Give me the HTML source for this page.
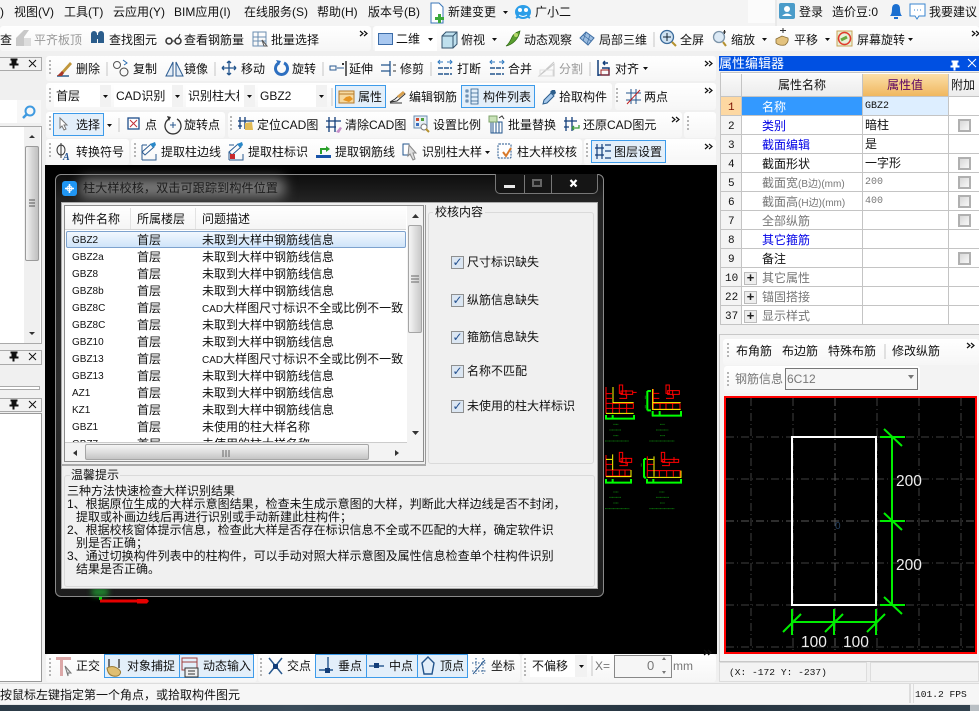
<!DOCTYPE html>
<html lang="zh"><head><meta charset="utf-8"><title>柱大样校核</title>
<style>
html,body{margin:0;padding:0}
body{position:relative;width:979px;height:711px;overflow:hidden;background:#f0f0f0;font:12px/14px "Liberation Sans","Noto Sans CJK SC",sans-serif;color:#111}
div{position:absolute;box-sizing:border-box}
span{position:absolute;white-space:nowrap;line-height:14px;font-size:12px}
span[style*="font-size:10px"]{margin-top:1px}
svg{position:absolute;left:0;top:0}
small{font-size:10px}
.tb{background:linear-gradient(#fff,#f6f6f6);border-radius:3px}
.btn{background:#e3effa;border:1px solid #3d9bea}
.cb{background:#fff;}
.g{color:#999}
.blue{color:#0000e6}
.d{color:#777}
.m{font-family:"Liberation Mono","Noto Sans CJK SC",monospace;font-size:10px;margin-top:1px}
span.m[style*="left:72"]{margin-top:2px;font-size:11px}
.w{color:#fff}
.l{background:#c4c4c4}
.chk{width:13px;height:13px;background:linear-gradient(135deg,#d8d8d8,#f8f8f8);border:2px solid #b0b0b0}
.plus{width:13px;height:13px;background:#eee;border:1px solid #bbb;font:bold 13px/11px "Liberation Mono",monospace;text-align:center;color:#222}
.dc{width:13px;height:13px;background:#dbe6f2;border:1px solid #8e8f8f;color:#23508f;font:bold 12px/11px "Liberation Sans","DejaVu Sans",sans-serif;text-align:center}
</style></head><body>

<!-- top bars -->
<div style="left:0;top:0;width:979px;height:26px;background:#f4f4f4"></div>
<div style="left:748px;top:0;width:27px;height:23px;background:#fbfbfb"></div>
<div style="left:775px;top:0;width:2px;height:26px;background:#e9e9e9"></div>
<div class="tb" style="left:0;top:26px;width:371px;height:25px"></div>
<div class="tb" style="left:373px;top:26px;width:606px;height:25px"></div>
<div class="cb" style="left:375px;top:27px;width:62px;height:24px"></div>

<div class="tb" style="left:46px;top:56px;width:670px;height:25px"></div>
<div class="tb" style="left:46px;top:83px;width:566px;height:27px"></div>
<div class="tb" style="left:615px;top:83px;width:101px;height:27px"></div>
<div class="tb" style="left:46px;top:112px;width:179px;height:26px"></div>
<div class="tb" style="left:228px;top:112px;width:454px;height:26px"></div>
<div class="tb" style="left:684px;top:112px;width:32px;height:26px"></div>
<div class="tb" style="left:46px;top:139px;width:83px;height:26px"></div>
<div class="tb" style="left:131px;top:139px;width:451px;height:26px"></div>
<div class="tb" style="left:584px;top:139px;width:132px;height:26px"></div>

<!-- combos -->
<div class="cb" style="left:54px;top:85px;width:46px;height:22px"></div>
<div class="cb" style="left:114px;top:85px;width:58px;height:22px"></div>
<div class="cb" style="left:186px;top:85px;width:58px;height:22px"></div>
<div class="cb" style="left:258px;top:85px;width:58px;height:22px"></div>
<div style="left:100px;top:85px;width:11px;height:22px;background:#f2f2f2"></div>
<div style="left:172px;top:85px;width:11px;height:22px;background:#f2f2f2"></div>
<div style="left:244px;top:85px;width:11px;height:22px;background:#f2f2f2"></div>
<div style="left:316px;top:85px;width:11px;height:22px;background:#f2f2f2"></div>

<!-- hot buttons -->
<div class="btn" style="left:335px;top:85px;width:51px;height:23px"></div>
<div class="btn" style="left:461px;top:85px;width:74px;height:23px"></div>
<div class="btn" style="left:53px;top:113px;width:51px;height:23px"></div>
<div class="btn" style="left:591px;top:140px;width:75px;height:23px"></div>

<!-- menu text -->
<span style="left:0;top:5px">)</span>
<span style="left:14px;top:5px">视图(V)</span>
<span style="left:64px;top:5px">工具(T)</span>
<span style="left:113px;top:5px">云应用(Y)</span>
<span style="left:174px;top:5px">BIM应用(I)</span>
<span style="left:244px;top:5px">在线服务(S)</span>
<span style="left:317px;top:5px">帮助(H)</span>
<span style="left:368px;top:5px">版本号(B)</span>
<span style="left:448px;top:5px">新建变更</span>
<span style="left:535px;top:5px">广小二</span>
<span style="left:799px;top:5px">登录</span>
<span style="left:832px;top:5px">造价豆:0</span>
<span style="left:929px;top:5px">我要建议</span>

<!-- row 1 -->
<span style="left:0;top:33px">查</span>
<span class="g" style="left:34px;top:33px">平齐板顶</span>
<span style="left:109px;top:33px">查找图元</span>
<span style="left:184px;top:33px">查看钢筋量</span>
<span style="left:271px;top:33px">批量选择</span>
<span style="left:396px;top:32px">二维</span>
<span style="left:461px;top:33px">俯视</span>
<span style="left:524px;top:33px">动态观察</span>
<span style="left:599px;top:33px">局部三维</span>
<span style="left:680px;top:33px">全屏</span>
<span style="left:731px;top:33px">缩放</span>
<span style="left:794px;top:33px">平移</span>
<span style="left:857px;top:33px">屏幕旋转</span>

<!-- row 2 -->
<span style="left:76px;top:62px">删除</span>
<span style="left:133px;top:62px">复制</span>
<span style="left:184px;top:62px">镜像</span>
<span style="left:241px;top:62px">移动</span>
<span style="left:292px;top:62px">旋转</span>
<span style="left:349px;top:62px">延伸</span>
<span style="left:400px;top:62px">修剪</span>
<span style="left:457px;top:62px">打断</span>
<span style="left:508px;top:62px">合并</span>
<span class="g" style="left:559px;top:62px">分割</span>
<span style="left:615px;top:62px">对齐</span>

<!-- row 3 -->
<span style="left:56px;top:89px">首层</span>
<span style="left:116px;top:89px">CAD识别</span>
<span style="left:188px;top:89px;width:51px;overflow:hidden">识别柱大样</span>
<span style="left:260px;top:89px">GBZ2</span>
<span style="left:358px;top:90px">属性</span>
<span style="left:409px;top:90px">编辑钢筋</span>
<span style="left:483px;top:90px">构件列表</span>
<span style="left:559px;top:90px">拾取构件</span>
<span style="left:644px;top:90px">两点</span>

<!-- row 4 -->
<span style="left:76px;top:118px">选择</span>
<span style="left:145px;top:118px">点</span>
<span style="left:184px;top:118px">旋转点</span>
<span style="left:257px;top:118px">定位CAD图</span>
<span style="left:345px;top:118px">清除CAD图</span>
<span style="left:433px;top:118px">设置比例</span>
<span style="left:508px;top:118px">批量替换</span>
<span style="left:583px;top:118px">还原CAD图元</span>

<!-- row 5 -->
<span style="left:76px;top:145px">转换符号</span>
<span style="left:161px;top:145px">提取柱边线</span>
<span style="left:248px;top:145px">提取柱标识</span>
<span style="left:335px;top:145px">提取钢筋线</span>
<span style="left:422px;top:145px">识别柱大样</span>
<span style="left:517px;top:145px">柱大样校核</span>
<span style="left:614px;top:145px">图层设置</span>

<!-- left panel -->
<div style="left:0;top:57px;width:42px;height:14px;background:#f2f2f2;border:1px solid #aaa;border-left:0"></div>
<div class="cb" style="left:0;top:100px;width:17px;height:23px"></div>
<div style="left:17px;top:100px;width:24px;height:23px;background:#f7f7f7"></div>
<div class="cb" style="left:0;top:126px;width:42px;height:218px;border:1px solid #aaa;border-left:0"></div>
<div style="left:24px;top:127px;width:16px;height:216px;background:#f0f0f0"></div>
<div style="left:25px;top:146px;width:14px;height:115px;background:linear-gradient(90deg,#f3f3f3,#d4d4d4 55%,#c0c0c0);border:1px solid #9a9a9a;border-radius:2px"></div>
<div style="left:0;top:350px;width:42px;height:15px;background:#f2f2f2;border:1px solid #aaa;border-left:0"></div>
<div style="left:0;top:386px;width:40px;height:4px;background:#fff;border:1px solid #aaa;border-left:0"></div>
<div style="left:0;top:398px;width:42px;height:14px;background:#f2f2f2;border:1px solid #aaa;border-left:0"></div>
<div class="cb" style="left:0;top:413px;width:42px;height:269px;border:1px solid #999;border-left:0"></div>

<!-- canvas -->
<div style="left:45px;top:165px;width:672px;height:489px;background:#000"></div>

<!-- right panel -->
<div style="left:719px;top:56px;width:260px;height:15px;background:#0050e2"></div>
<span class="w" style="left:719px;top:57px;font-size:13px">属性编辑器</span>
<div style="left:720px;top:72px;width:259px;height:253px;background:#fff;border:1px solid #c4c4c4;border-right:0"></div>
<div style="left:721px;top:74px;width:21px;height:22px;background:linear-gradient(#fafafa,#ececec)"></div>
<div style="left:742px;top:74px;width:120px;height:22px;background:linear-gradient(#fafafa,#ececec)"></div>
<div style="left:862px;top:74px;width:86px;height:22px;background:linear-gradient(#fbdfa8,#f0b75f)"></div>
<div style="left:948px;top:74px;width:31px;height:22px;background:linear-gradient(#fafafa,#ececec)"></div>
<div style="left:721px;top:96px;width:21px;height:19px;background:#fdd8a2"></div>
<div style="left:742px;top:96px;width:120px;height:19px;background:#3399ff"></div>
<div style="left:862px;top:96px;width:86px;height:19px;background:#ddeeff"></div>
<div style="left:721px;top:115px;width:21px;height:209px;background:#f4f4f4"></div>
<div class="l" style="left:721px;top:96px;width:258px;height:1px"></div>
<div class="l" style="left:721px;top:115px;width:258px;height:1px"></div>
<div class="l" style="left:721px;top:134px;width:258px;height:1px"></div>
<div class="l" style="left:721px;top:153px;width:258px;height:1px"></div>
<div class="l" style="left:721px;top:172px;width:258px;height:1px"></div>
<div class="l" style="left:721px;top:191px;width:258px;height:1px"></div>
<div class="l" style="left:721px;top:210px;width:258px;height:1px"></div>
<div class="l" style="left:721px;top:229px;width:258px;height:1px"></div>
<div class="l" style="left:721px;top:248px;width:258px;height:1px"></div>
<div class="l" style="left:721px;top:267px;width:258px;height:1px"></div>
<div class="l" style="left:721px;top:286px;width:258px;height:1px"></div>
<div class="l" style="left:721px;top:305px;width:258px;height:1px"></div>
<div class="l" style="left:721px;top:324px;width:258px;height:1px"></div>
<div class="l" style="left:741px;top:74px;width:1px;height:250px"></div>
<div class="l" style="left:862px;top:74px;width:1px;height:250px"></div>
<div class="l" style="left:948px;top:74px;width:1px;height:250px"></div>

<span style="left:778px;top:78px">属性名称</span>
<span style="left:887px;top:78px;color:#5a0060">属性值</span>
<span style="left:951px;top:78px">附加</span>

<span class="m" style="left:728px;top:99px;color:#7a1000">1</span>
<span class="m" style="left:728px;top:118px">2</span>
<span class="m" style="left:728px;top:137px">3</span>
<span class="m" style="left:728px;top:156px">4</span>
<span class="m" style="left:728px;top:175px">5</span>
<span class="m" style="left:728px;top:194px">6</span>
<span class="m" style="left:728px;top:213px">7</span>
<span class="m" style="left:728px;top:232px">8</span>
<span class="m" style="left:728px;top:251px">9</span>
<span class="m" style="left:725px;top:270px">10</span>
<span class="m" style="left:725px;top:289px">22</span>
<span class="m" style="left:725px;top:308px">37</span>

<span class="w" style="left:762px;top:100px">名称</span>
<span class="blue" style="left:762px;top:119px">类别</span>
<span class="blue" style="left:762px;top:138px">截面编辑</span>
<span style="left:762px;top:157px">截面形状</span>
<span class="d" style="left:762px;top:176px">截面宽<small>(B边)(mm)</small></span>
<span class="d" style="left:762px;top:195px">截面高<small>(H边)(mm)</small></span>
<span class="d" style="left:762px;top:214px">全部纵筋</span>
<span class="blue" style="left:762px;top:233px">其它箍筋</span>
<span style="left:762px;top:252px">备注</span>
<span class="d" style="left:762px;top:271px">其它属性</span>
<span class="d" style="left:762px;top:290px">锚固搭接</span>
<span class="d" style="left:762px;top:309px">显示样式</span>

<span class="m" style="left:865px;top:99px">GBZ2</span>
<span style="left:865px;top:118px">暗柱</span>
<span style="left:865px;top:137px">是</span>
<span style="left:865px;top:156px">一字形</span>
<span class="m d" style="left:865px;top:175px">200</span>
<span class="m d" style="left:865px;top:194px">400</span>

<div class="chk" style="left:958px;top:119px"></div>
<div class="chk" style="left:958px;top:157px"></div>
<div class="chk" style="left:958px;top:176px"></div>
<div class="chk" style="left:958px;top:195px"></div>
<div class="chk" style="left:958px;top:214px"></div>
<div class="chk" style="left:958px;top:252px"></div>
<div class="plus" style="left:744px;top:272px">+</div>
<div class="plus" style="left:744px;top:291px">+</div>
<div class="plus" style="left:744px;top:310px">+</div>

<div style="left:719px;top:334px;width:260px;height:328px;background:#f3f3f3;border:1px solid #c8c8c8;border-right:0"></div>
<div class="tb" style="left:723px;top:339px;width:256px;height:26px"></div>
<div class="tb" style="left:724px;top:366px;width:196px;height:27px"></div>
<span style="left:736px;top:344px">布角筋</span>
<span style="left:782px;top:344px">布边筋</span>
<span style="left:828px;top:344px">特殊布筋</span>
<span style="left:892px;top:344px">修改纵筋</span>
<span class="d" style="left:735px;top:372px">钢筋信息</span>
<div style="left:785px;top:368px;width:133px;height:22px;border:1px solid #777;background:#f6f6f6"></div>
<span class="d" style="left:787px;top:372px">6C12</span>

<!-- bottom status boxes -->
<div style="left:719px;top:662px;width:148px;height:20px;background:#f3f3f3;border:1px solid #ddd"></div>
<div style="left:870px;top:662px;width:109px;height:20px;background:#f3f3f3;border:1px solid #ddd"></div>
<span class="m" style="left:729px;top:664px;font-size:9.6px">(X: -172 Y: -237)</span>

<!-- bottom toolbars -->
<div class="tb" style="left:46px;top:654px;width:211px;height:28px"></div>
<div class="tb" style="left:258px;top:654px;width:262px;height:28px"></div>
<div class="tb" style="left:522px;top:654px;width:194px;height:28px"></div>
<div class="btn" style="left:104px;top:654px;width:76px;height:24px"></div>
<div class="btn" style="left:179px;top:654px;width:75px;height:24px"></div>
<div class="btn" style="left:315px;top:654px;width:52px;height:24px"></div>
<div class="btn" style="left:366px;top:654px;width:52px;height:24px"></div>
<div class="btn" style="left:417px;top:654px;width:51px;height:24px"></div>
<div class="cb" style="left:530px;top:655px;width:45px;height:22px"></div>
<div style="left:575px;top:655px;width:12px;height:22px;background:#f2f2f2"></div>
<div style="left:614px;top:655px;width:58px;height:23px;background:#f6f6f6;border:1px solid #888"></div>
<span style="left:76px;top:659px">正交</span>
<span style="left:127px;top:659px">对象捕捉</span>
<span style="left:203px;top:659px">动态输入</span>
<span style="left:287px;top:659px">交点</span>
<span style="left:338px;top:659px">垂点</span>
<span style="left:389px;top:659px">中点</span>
<span style="left:440px;top:659px">顶点</span>
<span style="left:491px;top:659px">坐标</span>
<span style="left:532px;top:659px">不偏移</span>
<span class="d" style="left:595px;top:659px">X=</span>
<span class="d" style="left:647px;top:659px;font-size:13px">0</span>
<span class="d" style="left:673px;top:659px">mm</span>

<!-- status bar -->
<div style="left:0;top:683px;width:979px;height:22px;background:#f6f6f6;border-top:1px solid #dcdcdc;border-bottom:1px solid #e8e8e8"></div>
<div style="left:909px;top:684px;width:2px;height:19px;background:#ddd"></div>
<div style="left:913px;top:684px;width:66px;height:19px;border-left:1px solid #ddd"></div>
<span style="left:0;top:688px">按鼠标左键指定第一个角点，或拾取构件图元</span>
<span class="m" style="left:915px;top:687px;font-size:9.6px">101.2 FPS</span>
<div style="left:0;top:705px;width:979px;height:6px;background:linear-gradient(90deg,#2b3a46,#3a4c5a 30%,#25333f 70%,#33434f)"></div>
<div style="left:970px;top:705px;width:9px;height:6px;background:#b9bfc4"></div>

<!-- overlay icons and drawings -->
<svg width="979" height="711" viewBox="0 0 979 711" fill="none">
<!-- grips -->
<g stroke="#b5b5b5" stroke-width="2" stroke-dasharray="2 2">
<path d="M50 60V76M50 88V104M50 116V132M50 143V159M135 143V159M231 116V132M617 88V104M688 116V132M587 143V159M50 658V676M261 658V676M525 658V676M728 343V359M728 372V388"/>
</g>
<!-- separators -->
<path d="M107 62V76M215 62V76M323 62V76M431 62V76M590 62V76M332 88V106M119 118V132M654 32V47M885 344V359M592 656V676" stroke="#c6c6c6"/>
<!-- chevrons » -->
<g stroke="#111" stroke-width="1.2">
<path d="M360 31l3 2.500-3 2.500M364 31l3 2.500-3 2.500M972 31l3 2.500-3 2.500M976 31l3 2.500-3 2.500M705 61l3 2.500-3 2.500M709 61l3 2.500-3 2.500M705 88l3 2.500-3 2.500M709 88l3 2.500-3 2.500M672 117l3 2.500-3 2.500M676 117l3 2.500-3 2.500M705 144l3 2.500-3 2.500M709 144l3 2.500-3 2.500M704 650l3 2.500-3 2.500M708 650l3 2.500-3 2.500M967 343l3 2.500-3 2.500M971 343l3 2.500-3 2.500"/>
</g>
<!-- dropdown arrows -->
<g fill="#111">
<path d="M503 11h5l-2.500 3zM428 38h5l-2.500 3zM492 38h5l-2.500 3zM762 38h5l-2.500 3zM825 38h5l-2.500 3zM908 38h5l-2.500 3zM643 67h5l-2.500 3zM103 95h5l-2.500 3zM175 95h5l-2.500 3zM247 95h5l-2.500 3zM319 95h5l-2.500 3zM107 124h5l-2.500 3zM485 151h5l-2.500 3zM579 665h5l-2.500 3z"/>
</g>
<path d="M908 375h6l-3 4z" fill="#777"/>

<!-- menu icons -->
<path d="M431 3h8l4 4v16h-12z" fill="#fff" stroke="#3a76b8"/><path d="M436 19h3v-3h3v3h3v3h-3v3h-3v-3h-3z" fill="#3aa83a" transform="translate(-1 -2)"/>
<ellipse cx="523" cy="12" rx="8" ry="7" fill="#2c9ee8"/><circle cx="520" cy="10" r="2" fill="#fff"/><circle cx="526" cy="10" r="2" fill="#fff"/><path d="M519 15q4 3 8 0" stroke="#fff"/><path d="M516 18l3-2M530 18l-3-2" stroke="#2c9ee8" stroke-width="2"/>
<rect x="779" y="3" width="16" height="16" rx="2" fill="#4b9cc9"/><circle cx="787" cy="9" r="3" fill="#fff"/><path d="M782 16q5-5 10 0z" fill="#fff"/>
<path d="M890 16q2-2 2-7 0-5 4-5t4 5q0 5 2 7zM894 17h4v2h-4z" fill="#1b6fd0"/>
<path d="M910 4h15v12h-6l-2 3-2-3h-5z" fill="#fff" stroke="#3a86d0"/><path d="M914 10h1M917 10h1M920 10h1" stroke="#3a86d0"/>

<!-- row 1 icons -->
<path d="M16 46V38l8-8h5l-5 7v9z" fill="#c8c8c8"/><path d="M24 38h7v8h-7z" fill="#ddd"/>
<path d="M91 34a3 3 0 016 0v9h-6zM98 34a3 3 0 016 0v9h-6z" fill="#2b5d8c"/><path d="M96 35h3v4h-3z" fill="#2b5d8c"/>
<circle cx="169" cy="41" r="3" stroke="#333" stroke-width="1.500"/><circle cx="178" cy="41" r="3" stroke="#333" stroke-width="1.500"/><path d="M172 41h3M178 38l2-4" stroke="#333"/>
<path d="M253 32h13v14h-13zM253 37h13M253 41h13M258 32v14" stroke="#6a8db0"/><path d="M262 40l5 6-3 0z" fill="#fff" stroke="#555"/>
<rect x="378.500" y="33.500" width="14" height="11" fill="#a9c8f0" stroke="#3c6ca8"/>
<path d="M442 36l4-4h11v12l-4 4h-11z" fill="#bfe0ee" stroke="#34556f"/><path d="M442 36h11v12M453 36l4-4" stroke="#34556f"/>
<path d="M506 46q3-2 6-9 2-4 8-6-1 6-5 10-4 4-9 5z" fill="#5a9e2f" stroke="#2f6a14" stroke-width=".7"/><circle cx="516" cy="35" r="2" fill="#b7d96c"/>
<path d="M580 38l6-6 8 6-6 7z" fill="#9cbde0" stroke="#3f6ea3"/><path d="M583 35l8 6M586 32l-3 9M590 35l-3 9" stroke="#3f6ea3" stroke-width=".7"/>
<circle cx="667" cy="37" r="6.500" fill="#cfe2f2" stroke="#3a6a9a" stroke-width="1.300"/><path d="M667 33v8M663 37h8" stroke="#123"/><path d="M672 42l4 4" stroke="#b5912f" stroke-width="2"/>
<circle cx="719" cy="37" r="5.500" fill="#dbe9f5" stroke="#7b93a8" stroke-width="1.300"/><path d="M723 42l3 4" stroke="#b5912f" stroke-width="2"/><path d="M723 32h3M724.500 30v4" stroke="#333"/>
<path d="M776 43q3 3 9 2 4-3 3-7l-6-2-6 3z" fill="#e3c27e" stroke="#86692f" stroke-width=".8"/><path d="M783 33v-5M780 30.500h6" stroke="#333"/>
<rect x="837" y="31" width="15" height="15" fill="#e8f1da" stroke="#c8a558"/><circle cx="844.500" cy="38.500" r="6" stroke="#e03a2a" stroke-width="1.500"/><path d="M841 40l6-3" stroke="#6aa83f" stroke-width="3"/>

<!-- row 2 icons -->
<path d="M57 76h12" stroke="#2b5d8c" stroke-width="1.500"/><path d="M61 72l9-10 2 2-9 10z" fill="#c0963a"/><path d="M57 76l5-5 2 2-2 3z" fill="#a8382a"/>
<circle cx="117" cy="65" r="3.500" stroke="#555"/><circle cx="124" cy="72" r="4" stroke="#444"/><path d="M123 60l4 3-3 2" stroke="#2a6cb0"/>
<path d="M173 62l-7 14h7zM176 62l7 14h-7z" stroke="#2a5a90" fill="#e5eef7"/>
<path d="M229 61v14M222 68h14M229 61l-2 2M229 61l2 2M229 75l-2-2M229 75l2-2M222 68l2-2M222 68l2 2M236 68l-2-2M236 68l-2 2" stroke="#23558d" stroke-width="1.300"/>
<path d="M279 63a6 6 0 105 0" stroke="#2d6fc0" stroke-width="3"/><path d="M276 60l5 1-2 4z" fill="#2d6fc0"/>
<path d="M346 61v15" stroke="#333" stroke-width="1.500"/><path d="M330 66h6v4h-6zM337 68h7" stroke="#2a5a90"/><path d="M342 63h2v2h-2z" fill="#333"/>
<path d="M381 65h9M381 71h9M390 61v15" stroke="#23558d" stroke-width="1.300"/><path d="M393 65h3M393 71h3" stroke="#333"/>
<path d="M438 62h5M447 62h5M440 60l-2 2 2 2M450 60l2 2-2 2" stroke="#2d78c0"/><path d="M438 68h14M438 74h14" stroke="#23558d" stroke-dasharray="5 1" stroke-width="1.400"/>
<path d="M490 62h5M499 62h5M492 60l-2 2 2 2M502 60l2 2-2 2" stroke="#2d78c0"/><path d="M490 68h14M490 74h14" stroke="#23558d" stroke-dasharray="5 1" stroke-width="1.400"/>
<path d="M539 76h15V64zM539 76l15-14" stroke="#c8c8c8"/><rect x="540" y="70" width="13" height="6" stroke="#ddd"/>
<path d="M598 60v16M598 75h11v-7h-7M603 63h5M603 63l2-2M603 63l2 2" stroke="#123e7a" stroke-width="1.500"/><path d="M601 70h8v5h-8z" stroke="#a02020"/>

<!-- row 3 icons -->
<rect x="339" y="91" width="15" height="12" fill="#f6d9a0" stroke="#b57a2a"/><path d="M339 94h15" stroke="#b57a2a"/><path d="M343 100l3-3 4-1 3 3-4 3z" fill="#e79522"/>
<path d="M390 102l5-3 8-7 2 2-8 7zM390 103h12" stroke="#333"/><path d="M397 96l6-5 2 2-6 5z" fill="#d9a04d"/>
<path d="M466 90h2v2h-2zM466 95h2v2h-2zM466 100h2v2h-2z" stroke="#2b5d8c" stroke-width=".8"/><path d="M471 89h7v15h-7zM471 93h7M471 97h7M471 101h7" stroke="#2b5d8c" stroke-width=".8"/>
<path d="M543 104l1-4 7-7 3 3-7 7z" fill="#a6c9ec" stroke="#2b5d8c"/><path d="M550 92l2-2 3 0 1 3-2 2z" fill="#2b5d8c"/>
<path d="M631 89v15M636 89v15M626 93h15M626 100h15" stroke="#23558d"/><path d="M627 104l13-14" stroke="#c02020"/>

<!-- row 4 icons -->
<path d="M60 118l7 7-3 0 2 4-2 1-2-4-2 2z" fill="#fff" stroke="#777"/>
<rect x="128" y="118" width="11" height="11" fill="#fff" stroke="#1e4e8c" stroke-width="1.300"/><path d="M130 120l7 7M137 120l-7 7" stroke="#c0303a"/>
<path d="M169 119a8 8 0 108 0" stroke="#333" stroke-width="1.300"/><path d="M167 116l4 1-2 4z" fill="#333"/><path d="M173 122v6M170 125h6" stroke="#2a5a90"/>
<path d="M240 117v12M245 117v12M238 121h16M238 126h4" stroke="#123e7a" stroke-width="1.300"/><path d="M245 130v-7l7-1 1 8z" fill="#e2bb56"/>
<path d="M329 117v15M335 117v15M326 121h15M326 127h10" stroke="#123e7a" stroke-width="1.300"/><path d="M336 132l4-5 2 1-3 5z" fill="#c58dc8"/>
<rect x="414" y="116" width="13" height="12" fill="#e6eef5" stroke="#6a8db0"/><rect x="416" y="118" width="3" height="3" fill="#d04a30"/><rect x="421" y="118" width="3" height="3" fill="#4f9e3a"/><rect x="416" y="123" width="3" height="3" fill="#3a6fc0"/><circle cx="424" cy="127" r="3" fill="#fff" stroke="#777"/><path d="M426 129l3 3" stroke="#b5912f" stroke-width="2"/>
<rect x="491" y="122" width="11" height="11" fill="#fff" stroke="#23558d"/><path d="M493 122v11M496 122v11M499 122v11" stroke="#23558d"/><rect x="489" y="116" width="8" height="6" fill="#c9e2b8" stroke="#7da36a"/><path d="M499 118l3-2 2 3" stroke="#333"/>
<path d="M566 117v14M572 117v14M564 121h13M564 127h5" stroke="#123e7a" stroke-width="1.300"/><path d="M572 128h7v-3M572 128l2-2M572 128l2 2" stroke="#3a9a3a" stroke-width="1.300"/>

<!-- row 5 icons -->
<ellipse cx="61" cy="150" rx="4" ry="5" stroke="#333"/><path d="M61 143v15" stroke="#333"/><text x="63" y="160" font-family="Liberation Serif" font-style="italic" font-weight="bold" font-size="10" fill="#1e4e8c">A</text>
<path d="M142 152l9-8 3 3-9 8zM142 145h5M142 160h14v-6M142 145v15" stroke="#2a5a90"/><path d="M150 144l5-2 1 3-3 3z" fill="#2a88c8"/>
<path d="M229 152l9-8 3 3-9 8zM229 145h5M229 160h14v-6M229 152v8" stroke="#2a5a90"/><path d="M237 144l5-2 1 3-3 3z" fill="#2a88c8"/><rect x="230" y="154" width="5" height="5" fill="#c8282a"/>
<path d="M316 155h15v3h-15z" fill="#1752a8"/><path d="M321 154v-5h6" stroke="#2aa02a" stroke-width="2"/><path d="M326 146l4 3-4 3z" fill="#2aa02a"/>
<rect x="403" y="144" width="6" height="11" stroke="#23558d" fill="#fff"/><path d="M409 145l7 8-3 0 2 6-2 1-3-6-2 2z" fill="#ddd" stroke="#888"/>
<rect x="498" y="144" width="13" height="14" rx="1" fill="#fff" stroke="#23558d" stroke-dasharray="2 1"/><path d="M503 152l3 4 5-8" stroke="#d8792a" stroke-width="2"/>
<path d="M597 144v15M602 144v15M595 148h9M595 155h9M605 151h6M605 145h6M605 158h6" stroke="#123e7a" stroke-width="1.200"/>

<!-- left panel icons -->
<g stroke="#111"><path d="M11 59h6v1h-1v4h2v1h-4v3h-1v-3h-3v-1h2v-4h-1z" fill="#111"/><path d="M29 60l7 7M36 60l-7 7"/></g>
<g stroke="#111"><path d="M11 352h6v1h-1v4h2v1h-4v3h-1v-3h-3v-1h2v-4h-1z" fill="#111"/><path d="M29 353l7 7M36 353l-7 7"/></g>
<g stroke="#111"><path d="M11 400h6v1h-1v4h2v1h-4v3h-1v-3h-3v-1h2v-4h-1z" fill="#111"/><path d="M29 401l7 7M36 401l-7 7"/></g>
<circle cx="30" cy="111" r="4.500" stroke="#3f9ae0" stroke-width="2"/><path d="M27 114l-4 4" stroke="#3f9ae0" stroke-width="2.500"/>
<path d="M29 138h6l-3-3zM29 332h6l-3 3z" fill="#333"/><path d="M29 200h6M29 203h6M29 206h6" stroke="#555"/>

<!-- right title icons -->
<g stroke="#fff"><path d="M952 61h6v1h-1v4h2v1h-4v3h-1v-3h-3v-1h2v-4h-1z" fill="#fff"/><path d="M968 59l8 8M976 59l-8 8"/></g>

<!-- bottom toolbar icons -->
<path d="M56 657h15v3h-15zM60 660h3v16h-3z" fill="#dca8a8"/><path d="M65 666l6 7-3 0 0 3z" fill="#ddd" stroke="#777"/>
<path d="M109 659v9M119 659v9" stroke="#333" stroke-width="1.300"/><path d="M107 668q5-3 10 0 5 3 3 6-2 3-7 2-5-1-6-8z" fill="#e0bf72" stroke="#9a7c38"/>
<path d="M182 658h15v12h-15zM182 662h15" stroke="#a04040"/><rect x="185" y="668" width="13" height="9" fill="#eee" stroke="#333"/><path d="M188 671h7M188 674h7" stroke="#333"/>
<path d="M269 658l13 16M282 658l-13 16" stroke="#2a5a90" stroke-width="1.500"/><rect x="273" y="664" width="5" height="5" fill="#123e7a"/>
<path d="M328 657v15M319 670h14" stroke="#23558d" stroke-width="1.400"/><rect x="325" y="668" width="5" height="5" fill="#123e7a"/>
<path d="M369 666h15" stroke="#23558d" stroke-width="1.400"/><rect x="374" y="663" width="5" height="5" fill="#123e7a"/>
<path d="M428 657l6 6-2 11h-8l-2-11z" stroke="#23558d" stroke-width="1.400"/>
<path d="M476 658v16M483 658v16M472 663h15M472 671h15" stroke="#2a5a90" stroke-dasharray="1.500 1.500"/><path d="M473 674l12-14" stroke="#2a5a90"/>
<path d="M662 660h4l-2-3zM662 671h4l-2 3z" fill="#777"/>

<!-- right panel preview -->
<rect x="725" y="397" width="251" height="256" fill="#000" stroke="#ff0000" stroke-width="2"/>
<g stroke="#3f3f3f">
<path d="M751 398V652M793 398V652M877 398V652M919 398V652M961 398V652M726 437H975M726 479H975M726 563H975M726 605H975M726 647H975" stroke-dasharray="8 3 1 3"/>
<path d="M835 398V652M726 521H975" stroke="#5a5a5a" stroke-dasharray="8 3 1 3"/>
</g>
<rect x="792" y="437" width="84" height="168" stroke="#fff" stroke-width="2"/>
<g stroke="#00ee00" stroke-width="2">
<path d="M892 437V605M880 437H905M880 521H905M880 605H905M884 429l18 17M884 513l18 17M884 597l18 17"/>
<path d="M792 622H876M792 609V635M834 609V635M876 609V635M783 632l18-18M825 632l18-18M867 632l18-18"/>
</g>
<g fill="#eee" font-family="Liberation Sans" font-size="15.500">
<text x="896" y="486">200</text><text x="896" y="570">200</text><text x="801" y="647">100</text><text x="843" y="647">100</text>
</g>
<text x="835" y="529" font-family="Liberation Sans" font-size="10" fill="#24405f">0</text>

<!-- CAD thumbnails -->
<g transform="translate(600 375) scale(.3333)" stroke-width="3">
<g stroke="#f00">
<path d="M18 36V115M18 56H36M18 70H36M18 85H100M18 100H100V85M38 85V115M58 85V115M80 85V115M58 30H68V55H58ZM63 48H98V58H63ZM78 45V62M58 70H80V60M98 52H110"/>
<path d="M160 42V105M160 55H178M160 70H178M160 85H240M160 103H240V85M180 85V103M198 85V103M218 85V103M198 30H208V55H198ZM203 47H238V58H203ZM218 45V62M198 70H220V60"/>
<path d="M18 240V305M18 268H36M18 285H92M18 303H92M38 285V303M58 285V303M75 285V303M58 232H68V260H58ZM63 250H95V262H63ZM78 248V268M58 272H82V262"/>
<path d="M142 244V305M142 268H160M142 287H240V305M178 287V305M200 287V305M220 287V305M184 232H194V260H184ZM188 253H236V262H188ZM222 246V262M186 272H208V260"/>
</g>
<g stroke="#ff0">
<path d="M39 36V83H101M18 115H101"/>
<path d="M158 42V105M158 83H242M160 103H242"/>
<path d="M38 238V285M18 253H36M18 305H93V285"/>
<path d="M162 244V305M144 253H160M142 307H243V287"/>
</g>
<g stroke="#0f0" stroke-width="6">
<path d="M15 131H105M18 120V134M38 120V134M102 120V134"/>
<path d="M156 122H246M158 108V124M179 108V124M243 108V124M142 48V106M142 48H153M142 106H153"/>
<path d="M15 323H96M18 312V326M38 312V326M93 312V326"/>
<path d="M138 323H246M141 312V326M160 312V326M243 312V326M132 252V308M132 252H139M132 308H139"/>
</g>
<g stroke="#0a6a0a" stroke-width="3" stroke-dasharray="3 1">
<path d="M40 148H56M28 165H64M40 182H56M15 198H86"/>
<path d="M180 148H194M168 165H205M180 182H196M148 198H224"/>
<path d="M40 351H56M28 367H64M40 384H56M15 401H88"/>
<path d="M178 351H194M168 367H208M180 384H194M148 401H224"/>
</g>
<path d="M136 62V72M136 90V100M124 265V275" stroke="#0a6a0a"/>
</g>
<rect x="99" y="597" width="3" height="3" fill="#00e000"/>
<path d="M100 599.500h37v-.5h10l2 2-2 2.500h-10v-1h-37z" fill="#e60000"/>
</svg>

<!-- dialog -->
<div style="left:55px;top:174px;width:549px;height:423px;background:linear-gradient(#0e0e0e,#232323 6%,#2c2c2c 50%,#1d1d1d);border:1px solid #8a8a8a;border-radius:6px"></div>
<div style="left:92px;top:588px;width:16px;height:8px;background:#1f8a2f;filter:blur(3px)"></div>
<div style="left:80px;top:178px;width:205px;height:20px;background:#777;filter:blur(6px);border-radius:6px"></div>
<div style="left:62px;top:181px;width:15px;height:15px;border-radius:3px;background:#2096f3"></div>
<svg width="979" height="711" fill="none"><path d="M69.500 184v9M65 188.500h9" stroke="#fff" stroke-width="1.500"/><circle cx="69.500" cy="188.500" r="2.500" stroke="#fff"/></svg>
<span style="left:83px;top:181px;color:#1d1d1d;font-size:12.200px">柱大样校核，双击可跟踪到构件位置</span>
<div style="left:495px;top:174px;width:103px;height:20px;border:1px solid #777;border-top:0;border-radius:0 0 5px 5px;background:#151515"></div>
<div style="left:524px;top:175px;width:1px;height:18px;background:#777"></div>
<div style="left:551px;top:175px;width:1px;height:18px;background:#777"></div>
<div style="left:504px;top:185px;width:11px;height:3px;background:#e8e8e8"></div>
<div style="left:532px;top:179px;width:10px;height:8px;border:2px solid #666;background:#222"></div>
<svg width="979" height="711" fill="none"><path d="M570.500 180l6 6.500M576.500 180l-6 6.500" stroke="#fff" stroke-width="2.200"/></svg>

<div style="left:61px;top:202px;width:537px;height:387px;background:#f0f0f0;border:1px solid #aaa"></div>

<!-- list -->
<div style="left:64px;top:205px;width:360px;height:257px;background:#fff;border:1px solid #8d8d8d"></div>
<div style="left:65px;top:206px;width:341px;height:24px;background:linear-gradient(#fff,#f5f5f5);border-bottom:1px solid #d5d5d5"></div>
<div style="left:130px;top:208px;width:1px;height:21px;background:#e3e3e3"></div>
<div style="left:195px;top:208px;width:1px;height:21px;background:#e3e3e3"></div>
<div style="left:66px;top:231px;width:340px;height:17px;background:linear-gradient(#f2f8fe,#cfe4f9);border:1px solid #7da2ce;border-radius:2px"></div>
<span style="left:72px;top:212px">构件名称</span>
<span style="left:137px;top:212px">所属楼层</span>
<span style="left:202px;top:212px">问题描述</span>

<span style="left:72px;top:233px;font-size:10px">GBZ2</span><span style="left:137px;top:233px">首层</span><span style="left:202px;top:233px">未取到大样中钢筋线信息</span>
<span style="left:72px;top:250px;font-size:10px">GBZ2a</span><span style="left:137px;top:250px">首层</span><span style="left:202px;top:250px">未取到大样中钢筋线信息</span>
<span style="left:72px;top:267px;font-size:10px">GBZ8</span><span style="left:137px;top:267px">首层</span><span style="left:202px;top:267px">未取到大样中钢筋线信息</span>
<span style="left:72px;top:284px;font-size:10px">GBZ8b</span><span style="left:137px;top:284px">首层</span><span style="left:202px;top:284px">未取到大样中钢筋线信息</span>
<span style="left:72px;top:301px;font-size:10px">GBZ8C</span><span style="left:137px;top:301px">首层</span><span style="left:202px;top:301px"><small>CAD</small>大样图尺寸标识不全或比例不一致</span>
<span style="left:72px;top:318px;font-size:10px">GBZ8C</span><span style="left:137px;top:318px">首层</span><span style="left:202px;top:318px">未取到大样中钢筋线信息</span>
<span style="left:72px;top:335px;font-size:10px">GBZ10</span><span style="left:137px;top:335px">首层</span><span style="left:202px;top:335px">未取到大样中钢筋线信息</span>
<span style="left:72px;top:352px;font-size:10px">GBZ13</span><span style="left:137px;top:352px">首层</span><span style="left:202px;top:352px"><small>CAD</small>大样图尺寸标识不全或比例不一致</span>
<span style="left:72px;top:369px;font-size:10px">GBZ13</span><span style="left:137px;top:369px">首层</span><span style="left:202px;top:369px">未取到大样中钢筋线信息</span>
<span style="left:72px;top:386px;font-size:10px">AZ1</span><span style="left:137px;top:386px">首层</span><span style="left:202px;top:386px">未取到大样中钢筋线信息</span>
<span style="left:72px;top:403px;font-size:10px">KZ1</span><span style="left:137px;top:403px">首层</span><span style="left:202px;top:403px">未取到大样中钢筋线信息</span>
<span style="left:72px;top:420px;font-size:10px">GBZ1</span><span style="left:137px;top:420px">首层</span><span style="left:202px;top:420px">未使用的柱大样名称</span>
<span style="left:72px;top:437px;font-size:10px">GBZ7</span><span style="left:137px;top:437px">首层</span><span style="left:202px;top:437px">未使用的柱大样名称</span>
<!-- clip + scrollbars -->
<div style="left:65px;top:442px;width:358px;height:19px;background:#f3f3f3;border-top:1px solid #ccc"></div>
<div style="left:407px;top:206px;width:16px;height:255px;background:#f3f3f3"></div>
<div style="left:408px;top:225px;width:14px;height:108px;background:linear-gradient(90deg,#f5f5f5,#dcdcdc 55%,#c8c8c8);border:1px solid #a5a5a5;border-radius:2px"></div>
<div style="left:85px;top:444px;width:284px;height:16px;background:linear-gradient(#f5f5f5,#dcdcdc 55%,#c4c4c4);border:1px solid #a5a5a5;border-radius:2px"></div>
<svg width="979" height="711" fill="none">
<path d="M412 218h7l-3.500-4zM412 431h7l-3.500 4zM77 450v6l-4-3zM395 450v6l4-3z" fill="#333"/>
<path d="M411 276h8M411 279h8M411 282h8M223 450v7M226 450v7M229 450v7" stroke="#666"/>
</svg>

<!-- group: 校核内容 -->
<div style="left:428px;top:212px;width:166px;height:252px;border:1px solid #dadada;border-radius:3px"></div>
<span style="left:433px;top:205px;background:#f0f0f0;padding:0 2px">校核内容</span>
<div style="left:425px;top:205px;width:1px;height:261px;background:#999"></div>
<div style="left:62px;top:464px;width:364px;height:2px;background:#aaa"></div>
<div class="dc" style="left:451px;top:256px">✓</div><span style="left:467px;top:255px">尺寸标识缺失</span>
<div class="dc" style="left:451px;top:294px">✓</div><span style="left:467px;top:293px">纵筋信息缺失</span>
<div class="dc" style="left:451px;top:331px">✓</div><span style="left:467px;top:330px">箍筋信息缺失</span>
<div class="dc" style="left:451px;top:365px">✓</div><span style="left:467px;top:364px">名称不匹配</span>
<div class="dc" style="left:451px;top:400px">✓</div><span style="left:467px;top:399px">未使用的柱大样标识</span>

<!-- group: 温馨提示 -->
<div style="left:64px;top:475px;width:531px;height:112px;border:1px solid #dadada;border-radius:3px"></div>
<span style="left:70px;top:468px;background:#f0f0f0;padding:0 1px">温馨提示</span>
<span style="left:67px;top:484px">三种方法快速检查大样识别结果</span>
<span style="left:67px;top:497px">1、根据原位生成的大样示意图结果，检查未生成示意图的大样，判断此大样边线是否不封闭，</span>
<span style="left:76px;top:510px">提取或补画边线后再进行识别或手动新建此柱构件；</span>
<span style="left:67px;top:523px">2、根据校核窗体提示信息，检查此大样是否存在标识信息不全或不匹配的大样，确定软件识</span>
<span style="left:76px;top:536px">别是否正确；</span>
<span style="left:67px;top:549px">3、通过切换构件列表中的柱构件，可以手动对照大样示意图及属性信息检查单个柱构件识别</span>
<span style="left:76px;top:562px">结果是否正确。</span>

</body></html>
